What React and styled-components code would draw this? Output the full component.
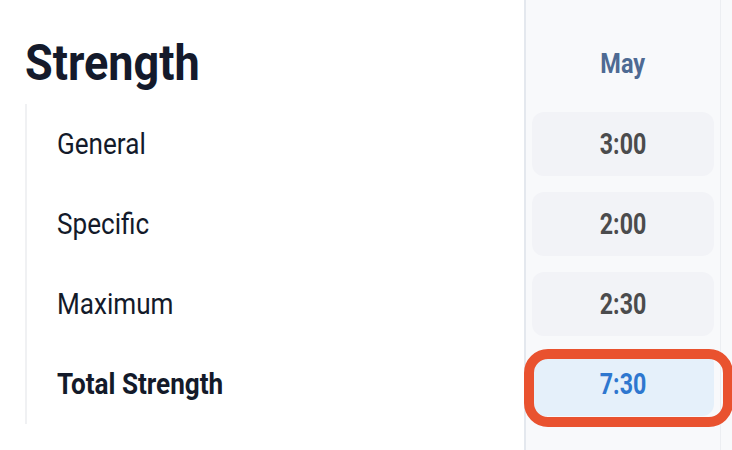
import React from 'react';
import styled, { createGlobalStyle } from 'styled-components';

const GlobalStyle = createGlobalStyle`
  html, body {
    margin: 0;
    padding: 0;
    background: #ffffff;
    font-family: Roboto, "Liberation Sans", sans-serif;
    overflow: hidden;
  }
`;

const Board = styled.div`
  display: grid;
  grid-template-columns: 526px 195px 1fr;
  height: 450px;
  width: 732px;
  overflow: hidden;
`;

// Roboto squeezed to approximate the condensed face of the original
const Narrow = styled.span`
  display: inline-block;
  white-space: nowrap;
  transform: scaleX(${p => p.$scale || 0.9});
  transform-origin: ${p => p.$origin || 'left'} center;
`;

const LabelPane = styled.div`
  border-right: 2px solid #e4e8ee;
  display: flex;
  flex-direction: column;
`;

const Heading = styled.h1`
  margin: 0;
  height: 104px;
  padding: 38px 0 0 25px;
  box-sizing: border-box;
  font-size: 50px;
  line-height: 1;
  font-weight: 700;
  color: #141a2b;
`;

const LabelList = styled.div`
  margin-left: 25px;
  border-left: 2px solid #f0f1f3;
  display: flex;
  flex-direction: column;
`;

const Label = styled.div`
  height: 80px;
  display: flex;
  align-items: center;
  padding-left: 30px;
  font-size: 29px;
  font-weight: ${p => (p.$total ? 700 : 400)};
  color: #131a2a;
`;

const MonthColumn = styled.div`
  background: #f8f9fb;
  border-right: 1px solid #eceef2;
  padding: 0 6px 0 ${p => (p.$edge ? 7 : 6)}px;
  display: flex;
  flex-direction: column;
`;

const MonthHead = styled.div`
  height: 104px;
  display: flex;
  align-items: center;
  justify-content: center;
  font-size: 27px;
  font-weight: 700;
  color: #4e6a93;
  padding-top: 23px;
  box-sizing: border-box;
`;

const Slot = styled.div`
  height: 80px;
  padding: 8px 0;
  box-sizing: border-box;
`;

const Cell = styled.div`
  position: relative;
  height: 64px;
  border-radius: 12px;
  background: ${p => (p.$total ? '#e5f0fa' : '#f2f3f7')};
  color: ${p => (p.$total ? '#2e77cf' : '#4b4b4d')};
  display: flex;
  align-items: center;
  justify-content: center;
  font-size: 29px;
  font-weight: 700;
`;

const Highlight = styled.span`
  position: absolute;
  left: -8px;
  top: -3px;
  width: 209px;
  height: 78px;
  box-sizing: border-box;
  border: 10px solid #e9522f;
  border-radius: 24px;
  pointer-events: none;
`;

const rows = [
  { label: 'General', value: '3:00' },
  { label: 'Specific', value: '2:00' },
  { label: 'Maximum', value: '2:30' },
  { label: 'Total Strength', value: '7:30', total: true },
];

const App = () => (
  <>
    <GlobalStyle />
    <Board>
      <LabelPane>
        <Heading>
          <Narrow>Strength</Narrow>
        </Heading>
        <LabelList>
          {rows.map(r => (
            <Label key={r.label} $total={r.total}>
              <Narrow>{r.label}</Narrow>
            </Label>
          ))}
        </LabelList>
      </LabelPane>
      <MonthColumn>
        <MonthHead>
          <Narrow $scale={0.87} $origin="center">May</Narrow>
        </MonthHead>
        {rows.map(r => (
          <Slot key={r.label}>
            <Cell $total={r.total}>
              <Narrow $scale={0.8} $origin="center">{r.value}</Narrow>
              {r.total && <Highlight />}
            </Cell>
          </Slot>
        ))}
      </MonthColumn>
      <MonthColumn $edge>
        <MonthHead />
        {rows.map(r => (
          <Slot key={r.label}>
            <Cell />
          </Slot>
        ))}
      </MonthColumn>
    </Board>
  </>
);

export default App;
